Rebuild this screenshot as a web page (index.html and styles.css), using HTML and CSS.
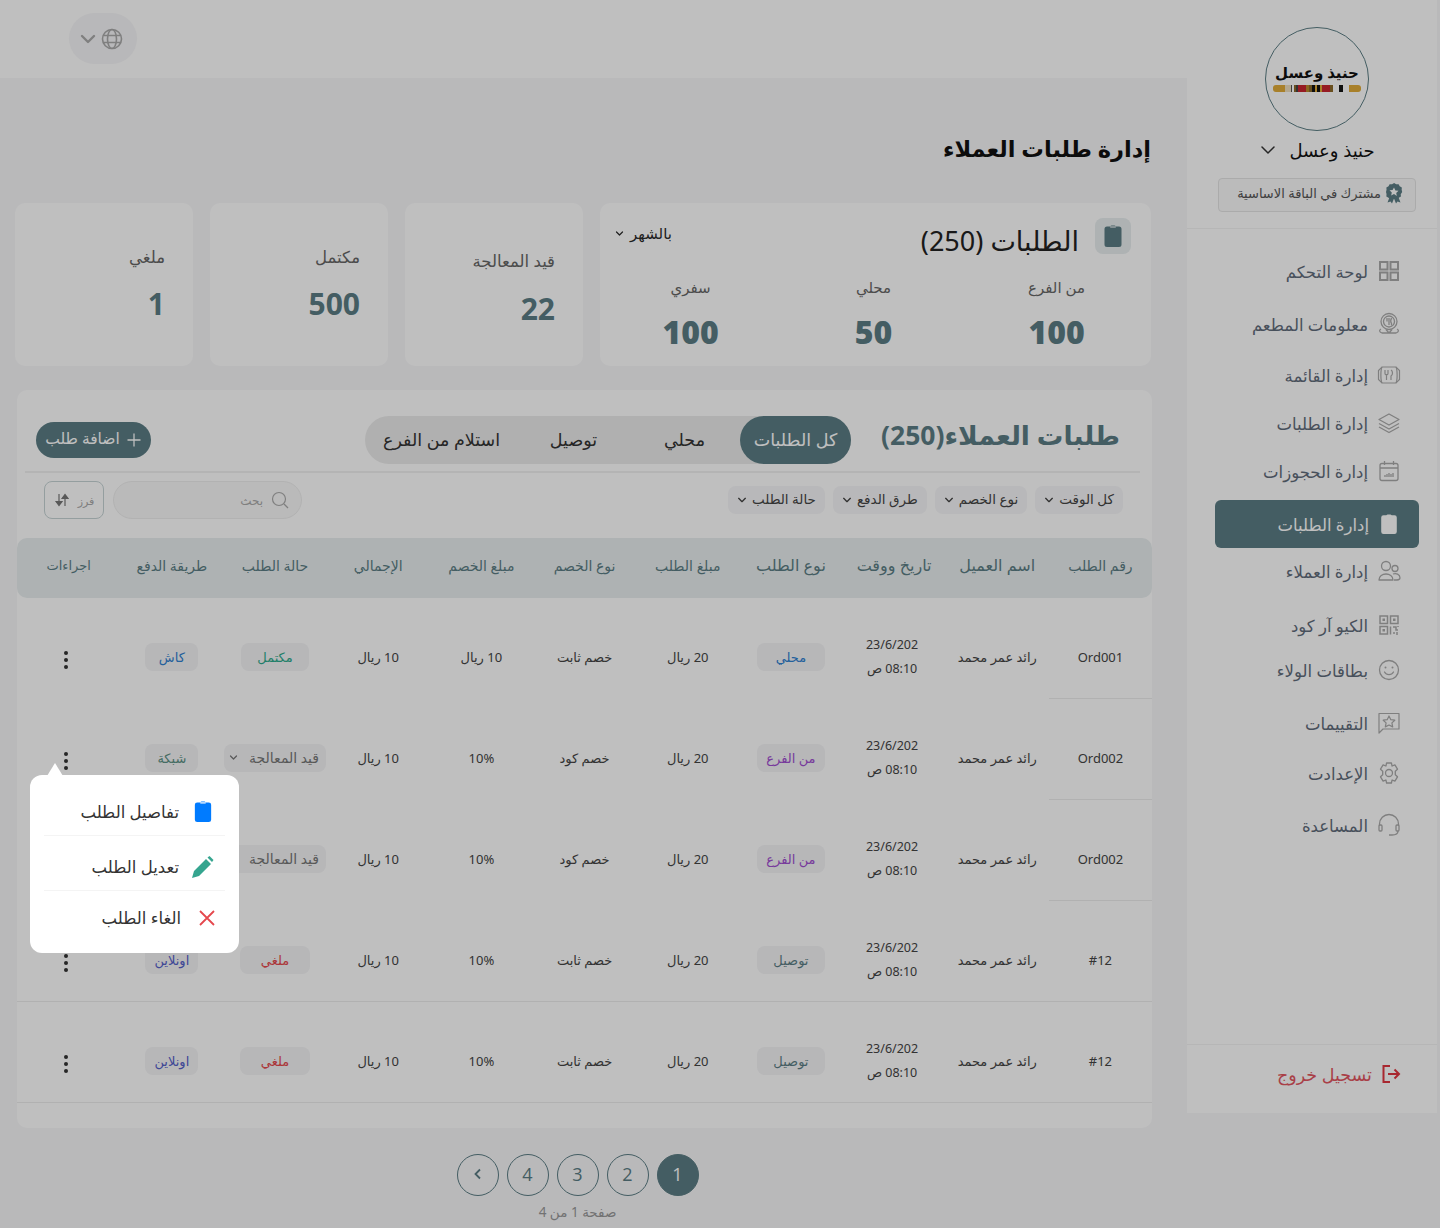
FILE: index.html
```html
<!DOCTYPE html>
<html lang="ar" dir="rtl">
<head>
  <meta charset="UTF-8" />
  <title>إدارة طلبات العملاء</title>
  <link rel="stylesheet" href="styles.css">
</head>
<body>
  <svg class="sprite" width="0" height="0">
    <symbol id="chev" viewBox="0 0 12 12"><path d="M2 4l4 4 4-4" fill="none" stroke="currentColor" stroke-width="1.600" stroke-linecap="round" stroke-linejoin="round"/></symbol>
    <symbol id="chev-thin" viewBox="0 0 12 12"><path d="M2 4l4 4 4-4" fill="none" stroke="currentColor" stroke-width="1" stroke-linecap="round" stroke-linejoin="round"/></symbol>
    <symbol id="clip" viewBox="0 0 18 24"><path d="M3 2.500h3.500a1 1 0 0 1 1-1h3a1 1 0 0 1 1 1H15a2.500 2.500 0 0 1 2.500 2.500v15.500a2.500 2.500 0 0 1-2.500 2.500H3A2.500 2.500 0 0 1 .5 20.500V5A2.500 2.500 0 0 1 3 2.500z" fill="currentColor"/><rect x="6" y="2.200" width="6" height="1.600" rx=".8" fill="#fff" opacity=".7"/></symbol>
    <symbol id="dots" viewBox="0 0 6 20"><circle cx="3" cy="3" r="2"/><circle cx="3" cy="10" r="2"/><circle cx="3" cy="17" r="2"/></symbol>
  </svg>

  <div class="app">
    <aside class="sidebar">
      <div class="brand">
        <div class="logo">
          <span class="logo-text">حنيذ وعسل</span>
          <svg class="logo-stripe" width="88" height="7" viewBox="0 0 88 7">
            <rect width="12" height="7" rx="3" fill="#e0ab38"/><rect x="5" width="7" height="7" fill="#e0ab38"/><rect x="12" width="6" height="7" fill="#efe0c0"/><rect x="18" width="1" height="7" fill="#555"/>
            <rect x="21" width="2" height="7" fill="#8c6a2a"/><rect x="23" width="2" height="7" fill="#444"/><rect x="25" width="8" height="7" fill="#c8252f"/><rect x="33" width="3" height="7" fill="#b98a2c"/><rect x="36" width="3" height="7" fill="#8c6a2a"/><rect x="39" width="3" height="7" fill="#151515"/><rect x="42" width="2" height="7" fill="#e0ab38"/><rect x="44" width="3" height="7" fill="#151515"/><rect x="47" width="2" height="7" fill="#e0ab38"/><rect x="49" width="8" height="7" fill="#c8252f"/><rect x="57" width="3" height="7" fill="#8c6a2a"/><rect x="66" width="4" height="7" fill="#151515"/><rect x="76" width="12" height="7" rx="3" fill="#e0ab38"/><rect x="76" width="6" height="7" fill="#e0ab38"/>
          </svg>
        </div>
        <div class="brand-name">
          <span>حنيذ وعسل</span>
          <svg class="brand-chev" width="18" height="18"><use href="#chev-thin"/></svg>
        </div>
        <div class="plan">
          <svg width="18" height="21" viewBox="0 0 18 21"><path d="M5 13l-2.500 6.500 3-1 1.500 2 2-5 2 5 1.500-2 3 1L13 13z" fill="#5b7d84"/><path d="M9 0l2.300 1.500 2.700-.2 1.200 2.400 2.400 1.200-.2 2.700L18 10l-1.600 2.400.2 2.700-2.400 1.200-1.200 1.200-2.700-.2L9 17.500l-2.300-.2-2.700.2-1.200-1.200L.4 15l.2-2.700L0 10l.6-2.400-.2-2.700 2.400-1.200L4 1.300l2.700.2z" fill="#5b7d84" transform="translate(1 0) scale(.9)"/><path d="M9 4.500l1.400 2.900 3.100.4-2.300 2.100.6 3.100L9 11l-2.800 1.500.6-3.100-2.300-2.100 3.100-.4z" fill="#fff"/></svg>
          <span>مشترك في الباقة الاساسية</span>
        </div>
      </div>

      <nav class="nav">
        <a class="nav-item">
          <svg viewBox="0 0 24 24"><g fill="none" stroke="currentColor" stroke-width="2"><rect x="3" y="3" width="7.500" height="7.500"/><rect x="13.500" y="3" width="7.500" height="7.500"/><rect x="3" y="13.500" width="7.500" height="7.500"/><rect x="13.500" y="13.500" width="7.500" height="7.500"/></g></svg>
          <span>لوحة التحكم</span>
        </a>
        <a class="nav-item nudge-5">
          <svg viewBox="0 0 24 24"><g fill="none" stroke="currentColor" stroke-width="1.300"><circle cx="12" cy="9.500" r="8"/><circle cx="12" cy="9.500" r="5.500"/><path d="M10 6v3.500M12 6v7M14.500 6c-1 2-1 4 0 5.500v2M4 17c-2 1-2 3 1 4h14c3-1 3-3 1-4M12 21l-3-3.500M12 21l3-3.500"/></g></svg>
          <span>معلومات المطعم</span>
        </a>
        <a class="nav-item nudge-3">
          <svg viewBox="0 0 24 24"><g fill="none" stroke="currentColor" stroke-width="1.200"><path d="M5 4h14l3.500 3.500v9L19 20H5l-3.500-3.500v-9z"/><path d="M5 4c-1.500 3-1.500 13 0 16M19 4c1.500 3 1.500 13 0 16M8 7v3.500a1.500 1.500 0 0 0 3 0V7M9.500 11v6M14 7c2 1 2 5 0 6v4"/></g></svg>
          <span>إدارة القائمة</span>
        </a>
        <a class="nav-item">
          <svg viewBox="0 0 24 24"><g fill="none" stroke="currentColor" stroke-width="1.300" stroke-linejoin="round"><path d="M12 3l10 5.500-10 5.500L2 8.500z"/><path d="M2 12.500l10 5.500 10-5.500"/><path d="M2 16l10 5.500L22 16"/></g></svg>
          <span>إدارة الطلبات</span>
        </a>
        <a class="nav-item">
          <svg viewBox="0 0 24 24"><g fill="none" stroke="currentColor" stroke-width="1.300"><rect x="3" y="4.500" width="18" height="17" rx="2"/><path d="M3 9h18M7.500 2v4M16.500 2v4M8 18v-2M10 18v-3M12 18v-4M14 18v-3M16 18v-4"/></g></svg>
          <span>إدارة الحجوزات</span>
        </a>
        <a class="nav-item active nudge-3">
          <svg class="nav-clip" width="18" height="22"><use href="#clip"/></svg>
          <span>إدارة الطلبات</span>
        </a>
        <a class="nav-item nudge-n3">
          <svg viewBox="0 0 24 24"><g fill="none" stroke="currentColor" stroke-width="1.300"><circle cx="9" cy="7" r="4.500"/><path d="M2 21c0-8 14-8 14 0z" stroke-linejoin="round"/><circle cx="18" cy="9.500" r="3"/><path d="M16 15c3-1 7 0 7 4 0 2-2 2-6 2"/></g></svg>
          <span>إدارة العملاء</span>
        </a>
        <a class="nav-item nudge-6">
          <svg viewBox="0 0 24 24"><g fill="none" stroke="currentColor" stroke-width="1.500"><rect x="3" y="3" width="7.500" height="7.500"/><rect x="13.500" y="3" width="7.500" height="7.500"/><rect x="3" y="13.500" width="7.500" height="7.500"/><path d="M13.500 13.500v8M16 14h3v3h2M21 13v1M16 20h2M20 19v3"/></g><rect x="5.500" y="5.500" width="2.500" height="2.500" fill="currentColor"/><rect x="16" y="5.500" width="2.500" height="2.500" fill="currentColor"/><rect x="5.500" y="16" width="2.500" height="2.500" fill="currentColor"/></svg>
          <span>الكيو آر كود</span>
        </a>
        <a class="nav-item nudge-n3">
          <svg viewBox="0 0 24 24"><g fill="none" stroke="currentColor" stroke-width="1.300"><circle cx="12" cy="12" r="9.500"/><path d="M7.500 14c2 3.500 7 3.500 9 0" stroke-linecap="round"/></g><circle cx="8.500" cy="9.500" r="1" fill="currentColor"/><circle cx="15.500" cy="9.500" r="1" fill="currentColor"/></svg>
          <span>بطاقات الولاء</span>
        </a>
        <a class="nav-item nudge-5">
          <svg viewBox="0 0 24 24"><g fill="none" stroke="currentColor" stroke-width="1.200" stroke-linejoin="round"><path d="M2 2.500h20V18H6l-4 4z"/><path d="M12 5l1.800 3.700 4 .5-2.900 2.700.8 4L12 14l-3.700 1.900.8-4-2.900-2.700 4-.5z"/></g></svg>
          <span>التقييمات</span>
        </a>
        <a class="nav-item nudge-2">
          <svg viewBox="0 0 24 24"><g fill="none" stroke="currentColor" stroke-width="1.300" stroke-linejoin="round"><circle cx="12" cy="12" r="3.500"/><path d="M9.600 2h4.800l.7 3 2.800-1.200 2.600 4.400-2.200 2 0 3.600 2.200 2-2.600 4.400-2.800-1.200-.7 3H9.600l-.7-3-2.800 1.200-2.600-4.400 2.200-2 0-3.600-2.200-2 2.600-4.400 2.800 1.200z"/></g></svg>
          <span>الإعدادت</span>
        </a>
        <a class="nav-item nudge-4">
          <svg viewBox="0 0 24 24"><g fill="none" stroke="currentColor" stroke-width="1.300"><path d="M2.500 13V11a9.500 9.500 0 0 1 19 0v2"/><rect x="2" y="12" width="3" height="6" rx="1"/><rect x="19" y="12" width="3" height="6" rx="1"/><path d="M21 18c0 3-2 4-6 4h-3"/></g></svg>
          <span>المساعدة</span>
        </a>
      </nav>

      <div class="logout">
        <svg width="20" height="20" viewBox="0 0 20 20"><path d="M9 2H2.500v16H9M7 10h11M13.500 5.500L18 10l-4.500 4.500" fill="none" stroke="currentColor" stroke-width="2"/></svg>
        <span>تسجيل خروج</span>
      </div>
    </aside>

    <main class="main">
      <header class="topbar">
        <div class="lang">
          <svg width="22" height="22" viewBox="0 0 22 22"><g fill="none" stroke="currentColor" stroke-width="1.600"><circle cx="11" cy="11" r="9.500"/><ellipse cx="11" cy="11" rx="4.500" ry="9.500"/><path d="M2 7.500h18M2 14.500h18"/></g></svg>
          <svg class="lang-chev" width="18" height="18"><use href="#chev"/></svg>
        </div>
      </header>

      <div class="content">
        <h1 class="page-title">إدارة طلبات العملاء</h1>

        <section class="stats">
          <div class="card stat-main">
            <div class="stat-head">
              <span class="stat-icon"><svg width="18" height="24"><use href="#clip"/></svg></span>
              <h2>الطلبات (250)</h2>
              <span class="period">بالشهر <svg width="9" height="9"><use href="#chev"/></svg></span>
            </div>
            <div class="stat-cols">
              <div><span class="stat-label">من الفرع</span><b class="stat-num big">100</b></div>
              <div><span class="stat-label">محلي</span><b class="stat-num big">50</b></div>
              <div><span class="stat-label">سفري</span><b class="stat-num big">100</b></div>
            </div>
          </div>
          <div class="card stat-small low"><span class="stat-label">قيد المعالجة</span><b class="stat-num">22</b></div>
          <div class="card stat-small"><span class="stat-label">مكتمل</span><b class="stat-num">500</b></div>
          <div class="card stat-small"><span class="stat-label">ملغي</span><b class="stat-num">1</b></div>
        </section>

        <section class="card orders">
          <div class="orders-head">
            <h2 class="orders-title">طلبات العملاء(250)</h2>
            <div class="tabs">
              <button class="tab active">كل الطلبات</button>
              <button class="tab">محلي</button>
              <button class="tab">توصيل</button>
              <button class="tab wide">استلام من الفرع</button>
            </div>
            <button class="add-btn">
              <svg width="16" height="16" viewBox="0 0 16 16"><path d="M8 1.500v13M1.500 8h13" stroke="currentColor" stroke-width="1.300" fill="none"/></svg>
              <span>اضافة طلب</span>
            </button>
          </div>

          <div class="tools">
            <div class="chips">
              <span class="chip">كل الوقت <svg width="10" height="10"><use href="#chev"/></svg></span>
              <span class="chip">نوع الخصم <svg width="10" height="10"><use href="#chev"/></svg></span>
              <span class="chip">طرق الدفع <svg width="10" height="10"><use href="#chev"/></svg></span>
              <span class="chip">حالة الطلب <svg width="10" height="10"><use href="#chev"/></svg></span>
            </div>
            <div class="search-wrap">
              <div class="search">
                <svg width="18" height="18" viewBox="0 0 18 18"><g fill="none" stroke="currentColor" stroke-width="1.200"><circle cx="8" cy="8" r="6.500"/><path d="M13 13l4 4"/></g></svg>
                <span>بحث</span>
              </div>
              <div class="sort">
                <span>فرز</span>
                <svg width="16" height="16" viewBox="0 0 16 16"><path d="M11 14V4M8 6.500L11 2.500l3 4z M5 2v10M2 9.500l3 4 3-4z" fill="currentColor" stroke="currentColor" stroke-width="1.200"/></svg>
              </div>
            </div>
          </div>

          <table class="orders-table">
            <thead>
              <tr>
                <th>رقم الطلب</th><th class="lg">اسم العميل</th><th class="lg">تاريخ ووقت</th><th class="lg">نوع الطلب</th><th>مبلغ الطلب</th><th>نوع الخصم</th><th>مبلغ الخصم</th><th>الإجمالي</th><th>حالة الطلب</th><th>طريقة الدفع</th><th class="sm">اجراءات</th>
              </tr>
            </thead>
            <tbody>
              <tr>
                <td>Ord001</td><td>رائد عمر محمد</td><td class="date">23/6/202<br>08:10 ص</td>
                <td><span class="tag blue">محلي</span></td><td>20 ريال</td><td>خصم ثابت</td><td>10 ريال</td><td>10 ريال</td>
                <td><span class="tag green">مكتمل</span></td><td><span class="tag pay blue">كاش</span></td>
                <td class="act"><svg class="dots" width="6" height="20"><use href="#dots"/></svg></td>
              </tr>
              <tr>
                <td>Ord002</td><td>رائد عمر محمد</td><td class="date">23/6/202<br>08:10 ص</td>
                <td><span class="tag purple">من الفرع</span></td><td>20 ريال</td><td>خصم كود</td><td>10%</td><td>10 ريال</td>
                <td><span class="tag gray">قيد المعالجة <svg width="9" height="9"><use href="#chev"/></svg></span></td><td><span class="tag pay teal">شبكة</span></td>
                <td class="act"><svg class="dots" width="6" height="20"><use href="#dots"/></svg></td>
              </tr>
              <tr>
                <td>Ord002</td><td>رائد عمر محمد</td><td class="date">23/6/202<br>08:10 ص</td>
                <td><span class="tag purple">من الفرع</span></td><td>20 ريال</td><td>خصم كود</td><td>10%</td><td>10 ريال</td>
                <td><span class="tag gray">قيد المعالجة <svg width="9" height="9"><use href="#chev"/></svg></span></td><td></td>
                <td class="act"></td>
              </tr>
              <tr>
                <td>#12</td><td>رائد عمر محمد</td><td class="date">23/6/202<br>08:10 ص</td>
                <td><span class="tag slate">توصيل</span></td><td>20 ريال</td><td>خصم ثابت</td><td>10%</td><td>10 ريال</td>
                <td><span class="tag red">ملغي</span></td><td><span class="tag pay indigo">اونلاين</span></td>
                <td class="act"><svg class="dots" width="6" height="20"><use href="#dots"/></svg></td>
              </tr>
              <tr>
                <td>#12</td><td>رائد عمر محمد</td><td class="date">23/6/202<br>08:10 ص</td>
                <td><span class="tag slate">توصيل</span></td><td>20 ريال</td><td>خصم ثابت</td><td>10%</td><td>10 ريال</td>
                <td><span class="tag red">ملغي</span></td><td><span class="tag pay indigo">اونلاين</span></td>
                <td class="act"><svg class="dots" width="6" height="20"><use href="#dots"/></svg></td>
              </tr>
            </tbody>
          </table>
        </section>

        <div class="pager">
          <div class="pages">
            <span class="page current">1</span>
            <span class="page">2</span>
            <span class="page">3</span>
            <span class="page">4</span>
            <span class="page"><svg width="14" height="14" viewBox="0 0 14 14"><path d="M9 2.500L4.500 7 9 11.500" fill="none" stroke="currentColor" stroke-width="1.800"/></svg></span>
          </div>
          <p class="page-note">صفحة 1 من 4</p>
        </div>
      </div>
    </main>
  </div>

  <div class="overlay"></div>

  <div class="menu">
    <div class="menu-row first">
      <span class="menu-icon"><svg class="menu-clip" width="18" height="23"><use href="#clip"/></svg></span>
      <span>تفاصيل الطلب</span>
    </div>
    <div class="menu-row second">
      <span class="menu-icon"><svg width="24" height="24" viewBox="0 0 24 24"><path d="M1 23l2-7L15 4l5 5L8 21zM16.500 2.500l2-1.500 4 4-1.500 2z" fill="#35a58f"/></svg></span>
      <span>تعديل الطلب</span>
    </div>
    <div class="menu-row third">
      <span class="menu-icon"><svg width="18" height="18" viewBox="0 0 18 18"><path d="M2 2l14 14M16 2L2 16" stroke="#e5484d" stroke-width="1.800" fill="none"/></svg></span>
      <span>الغاء الطلب</span>
    </div>
  </div>
</body>
</html>
```

FILE: styles.css
```css
* {
  box-sizing: border-box;
}
html, body {
  margin: 0;
  height: 1228px;
  overflow: hidden;
}
body {
  font-family: "Noto Sans", "DejaVu Sans", sans-serif;
  background: #f7f7f9;
  color: #2b2b2b;
}
h1, h2, p {
  margin: 0;
}
.sprite {
  position: absolute;
}
.app {
  display: flex;
  align-items: flex-start;
  padding-right: 3px;
}

/* sidebar */
.sidebar {
  width: 250px;
  height: 1113px;
  background: #fff;
  display: flex;
  flex-direction: column;
  flex-shrink: 0;
}
.brand {
  display: flex;
  flex-direction: column;
  align-items: center;
  padding: 27px 0 0 10px;
  height: 229px;
  border-bottom: 1px solid #f3f3f3;
}
.logo {
  width: 104px;
  height: 104px;
  border-radius: 50%;
  border: 1px solid #5b7d84;
  padding-bottom: 6px;
  display: flex;
  flex-direction: column;
  align-items: center;
  justify-content: center;
  flex-shrink: 0;
}
.logo-text {
  font-size: 15px;
  line-height: 22px;
  font-weight: 700;
  color: #111;
}
.logo-stripe {
  margin-top: 2px;
}
.brand-name {
  display: flex;
  align-items: center;
  gap: 12px;
  margin-top: 6px;
  font-size: 18px;
  line-height: 26px;
  color: #111;
}
.brand-chev {
  color: #333;
}
.plan {
  display: flex;
  align-items: center;
  gap: 4px;
  width: 198px;
  height: 34px;
  margin-top: 15px;
  padding: 0 12px 4px;
  border: 1px solid #e4e4e4;
  border-radius: 4px;
  background: #fafafa;
  font-size: 13px;
  color: #555;
}
.nav {
  padding-top: 20px;
  display: flex;
  flex-direction: column;
  gap: 4px;
}
.nav-item {
  display: flex;
  align-items: center;
  gap: 9px;
  height: 44px;
  width: 204px;
  margin-right: 18px;
  padding-right: 18px;
  font-size: 16.500px;
  color: #5f6b7a;
}
.nav-item svg {
  width: 24px;
  height: 24px;
  color: #aaa;
  flex-shrink: 0;
}
.nav-item.active {
  height: 48px;
  padding-right: 21px;
  border-radius: 6px;
  background: #5b7d84;
  color: #fff;
  gap: 11px;
}
.nav-item.active .nav-clip {
  width: 18px;
  height: 22px;
  color: #fff;
}
.nudge-2 { margin-top: 2px; }
.nudge-3 { margin-top: 3px; }
.nudge-4 { margin-top: 4px; }
.nudge-5 { margin-top: 5px; }
.nudge-6 { margin-top: 6px; }
.nudge-n3 { margin-top: -3px; }
.logout {
  margin-top: auto;
  height: 69px;
  border-top: 1px solid #f3f3f3;
  display: flex;
  align-items: center;
  gap: 9px;
  padding: 0 36px 10px 0;
  font-size: 17.500px;
  color: #e2555f;
}
.logout svg {
  color: #e0343f;
}

/* main column */
.main {
  flex: 1;
  min-width: 0;
}
.topbar {
  height: 78px;
  background: #fff;
  display: flex;
  align-items: flex-start;
  justify-content: flex-end;
  padding: 13px 0 0 69px;
}
.lang {
  display: flex;
  align-items: center;
  gap: 4px;
  width: 68px;
  height: 51px;
  padding-right: 14px;
  border-radius: 26px;
  background: #f6f6f8;
  color: #aaa;
}
.content {
  padding: 0 36px 0 15px;
}
.page-title {
  margin-top: 56px;
  height: 30px;
  font-size: 22.500px;
  line-height: 30px;
  font-weight: 700;
  color: #111;
}
.card {
  background: #fff;
  border-radius: 10px;
}
.stats {
  display: flex;
  gap: 17px;
  margin-top: 39px;
}
.stat-main {
  width: 551px;
  height: 163px;
  padding: 15px 0 0 15px;
}
.stat-head {
  display: flex;
  align-items: center;
  height: 36px;
  padding-right: 20px;
}
.stat-icon {
  width: 36px;
  height: 36px;
  border-radius: 8px;
  background: #e8eeef;
  color: #5b7d84;
  display: flex;
  align-items: center;
  justify-content: center;
}
.stat-head h2 {
  margin: 8px 16px 0 0;
  font-size: 27px;
  font-weight: 400;
  color: #222;
}
.period {
  display: flex;
  align-items: center;
  gap: 6px;
  margin: -6px auto 0 0;
  font-size: 15px;
}
.stat-cols {
  display: grid;
  grid-template-columns: repeat(3, 183px);
  margin: 21px 3px 0 0;
  text-align: center;
}
.stat-cols .stat-label {
  font-size: 15px;
}
.stat-label {
  display: block;
  font-size: 16.500px;
  line-height: 24px;
  color: #666;
}
.stat-num {
  display: block;
  margin-top: 17px;
  font-family: "Open Sans", sans-serif;
  font-size: 30px;
  line-height: 36px;
  font-weight: 700;
  color: #5b7d84;
}
.stat-num.big {
  margin-top: 12px;
  font-size: 32px;
  line-height: 42px;
  font-weight: 800;
}
.stat-small {
  width: 178px;
  height: 163px;
  padding: 42px 28px 0 0;
}
.stat-small.low {
  padding-top: 46px;
}
.stat-small.low .stat-num {
  margin-top: 18px;
}

/* orders card */
.orders {
  width: 1135px;
  height: 738px;
  margin: 24px -1px 0 0;
  overflow: hidden;
}
.orders-head {
  display: flex;
  align-items: flex-start;
  height: 83px;
  margin: 0 12px 0 8px;
  padding: 26px 20px 0 0;
  border-bottom: 2px solid #f0f0f0;
}
.orders-title {
  width: 269px;
  font-size: 26.500px;
  line-height: 38px;
  font-weight: 700;
  color: #5b7d84;
}
.tabs {
  display: flex;
  height: 48px;
  border-radius: 24px;
  background: #ebebeb;
}
.tab {
  width: 111px;
  height: 48px;
  padding: 0 0 2px;
  border: none;
  border-radius: 24px;
  background: transparent;
  font-family: inherit;
  font-size: 17.500px;
  color: #333;
}
.tab.wide {
  width: 153px;
}
.tab.active {
  background: #5b7d84;
  color: #fff;
}
.add-btn {
  display: flex;
  align-items: center;
  justify-content: center;
  gap: 6px;
  width: 115px;
  height: 36px;
  margin: 6px auto 0 11px;
  padding: 0 0 4px;
  border: none;
  border-radius: 18px;
  background: #5b7d84;
  color: #fff;
  font-family: inherit;
  font-size: 15.500px;
}
.add-btn svg {
  margin-top: 4px;
}
.tools {
  display: flex;
  justify-content: space-between;
  align-items: flex-start;
  height: 65px;
  padding: 8px 29px 0 27px;
}
.chips {
  display: flex;
  gap: 8px;
  margin-top: 5px;
}
.chip {
  display: flex;
  align-items: center;
  gap: 5px;
  height: 28px;
  padding: 0 9px 3px;
  border-radius: 8px;
  background: #f6f6f8;
  font-size: 13.500px;
  color: #444;
}
.chip svg {
  margin-top: 3px;
}
.search-wrap {
  display: flex;
  gap: 9px;
}
.search {
  display: flex;
  align-items: center;
  gap: 8px;
  width: 189px;
  height: 38px;
  padding-right: 12px;
  border: 1px solid #eee;
  border-radius: 19px;
  background: #f8f8f8;
  font-size: 12px;
  color: #aaa;
}
.sort {
  display: flex;
  align-items: center;
  justify-content: center;
  gap: 8px;
  width: 60px;
  height: 38px;
  border: 1px solid #c6d3d5;
  border-radius: 8px;
  font-size: 11px;
  color: #aaa;
}
.sort svg {
  color: #777;
}
.orders-table {
  width: 100%;
  border-collapse: separate;
  border-spacing: 0;
  table-layout: fixed;
  text-align: center;
  font-size: 13px;
  color: #444;
}
.orders-table th {
  height: 60px;
  padding: 0 0 6px;
  background: #e8eeef;
  font-weight: 400;
  font-size: 14px;
  color: #5b7d84;
}
.orders-table th.lg {
  font-size: 16px;
}
.orders-table th.sm {
  font-size: 13px;
}
.orders-table th:first-child {
  border-radius: 0 10px 10px 0;
}
.orders-table th:last-child {
  border-radius: 10px 0 0 10px;
}
.orders-table td {
  height: 101px;
  padding: 17px 0 0;
  border-bottom: 1px solid #ececec;
}
/* the first rows only rule off the id column */
.orders-table tbody tr:nth-child(-n+3) td:not(:first-child) {
  border-bottom-color: transparent;
}
.orders-table td.date {
  font-size: 12.500px;
  line-height: 24px;
  padding-right: 4px;
}
.orders-table td.act {
  padding: 27px 6px 0 0;
}
.tag {
  display: inline-flex;
  align-items: center;
  justify-content: center;
  gap: 4px;
  min-width: 68px;
  height: 28px;
  padding: 0 7px;
  border-radius: 8px;
  background: #f4f4f6;
  font-size: 13px;
}
.tag.pay {
  min-width: 53px;
}
.tag.blue { color: #2f80d0; }
.tag.green { color: #2eaa8c; }
.tag.purple { color: #a04ed0; }
.tag.gray {
  justify-content: space-between;
  padding: 0 7px 0 5px;
  color: #777;
  font-size: 14px;
  min-width: 102px;
}
.tag.teal { color: #5b9084; }
.tag.slate { color: #5b7d84; }
.tag.red { color: #e5484d; min-width: 70px; }
.tag.indigo { color: #5560c8; }
.dots {
  fill: #333;
  display: inline-block;
}

/* pagination */
.pager {
  margin: 26px 11px 0 0;
  display: flex;
  flex-direction: column;
  align-items: center;
}
.pages {
  display: flex;
  gap: 8px;
}
.page {
  width: 42px;
  height: 42px;
  padding-bottom: 3px;
  border-radius: 50%;
  border: 1px solid #5b7d84;
  display: flex;
  align-items: center;
  justify-content: center;
  font-family: "Open Sans", sans-serif;
  font-size: 18px;
  color: #5b7d84;
}
.page.current {
  background: #5b7d84;
  color: #fff;
}
.page-note {
  margin-top: 7px;
  font-size: 13.500px;
  color: #999;
}

/* dim layer and the open row menu */
.overlay {
  position: fixed;
  inset: 0;
  background: rgba(0, 0, 0, .25);
}
.menu {
  position: absolute;
  left: 30px;
  top: 775px;
  width: 209px;
  height: 178px;
  padding: 11px 14px 0;
  border-radius: 12px;
  background: #fff;
}
.menu::before {
  content: "";
  position: absolute;
  left: 17px;
  top: -12px;
  border: 8px solid transparent;
  border-top: 0;
  border-bottom: 13px solid #fff;
}
.menu-row {
  display: flex;
  align-items: center;
  gap: 12px;
  padding-right: 10px;
  border-bottom: 1px solid #f4f4f4;
  font-size: 16.500px;
  color: #333;
}
.menu-row.first {
  height: 50px;
  padding-top: 2px;
}
.menu-row.second {
  height: 55px;
  padding-top: 7px;
}
.menu-row.third {
  height: 53px;
  padding-right: 6px;
  gap: 14px;
  border-bottom: none;
}
.menu-icon {
  width: 24px;
  display: flex;
  justify-content: center;
}
.menu-clip {
  color: #007bff;
}
```
